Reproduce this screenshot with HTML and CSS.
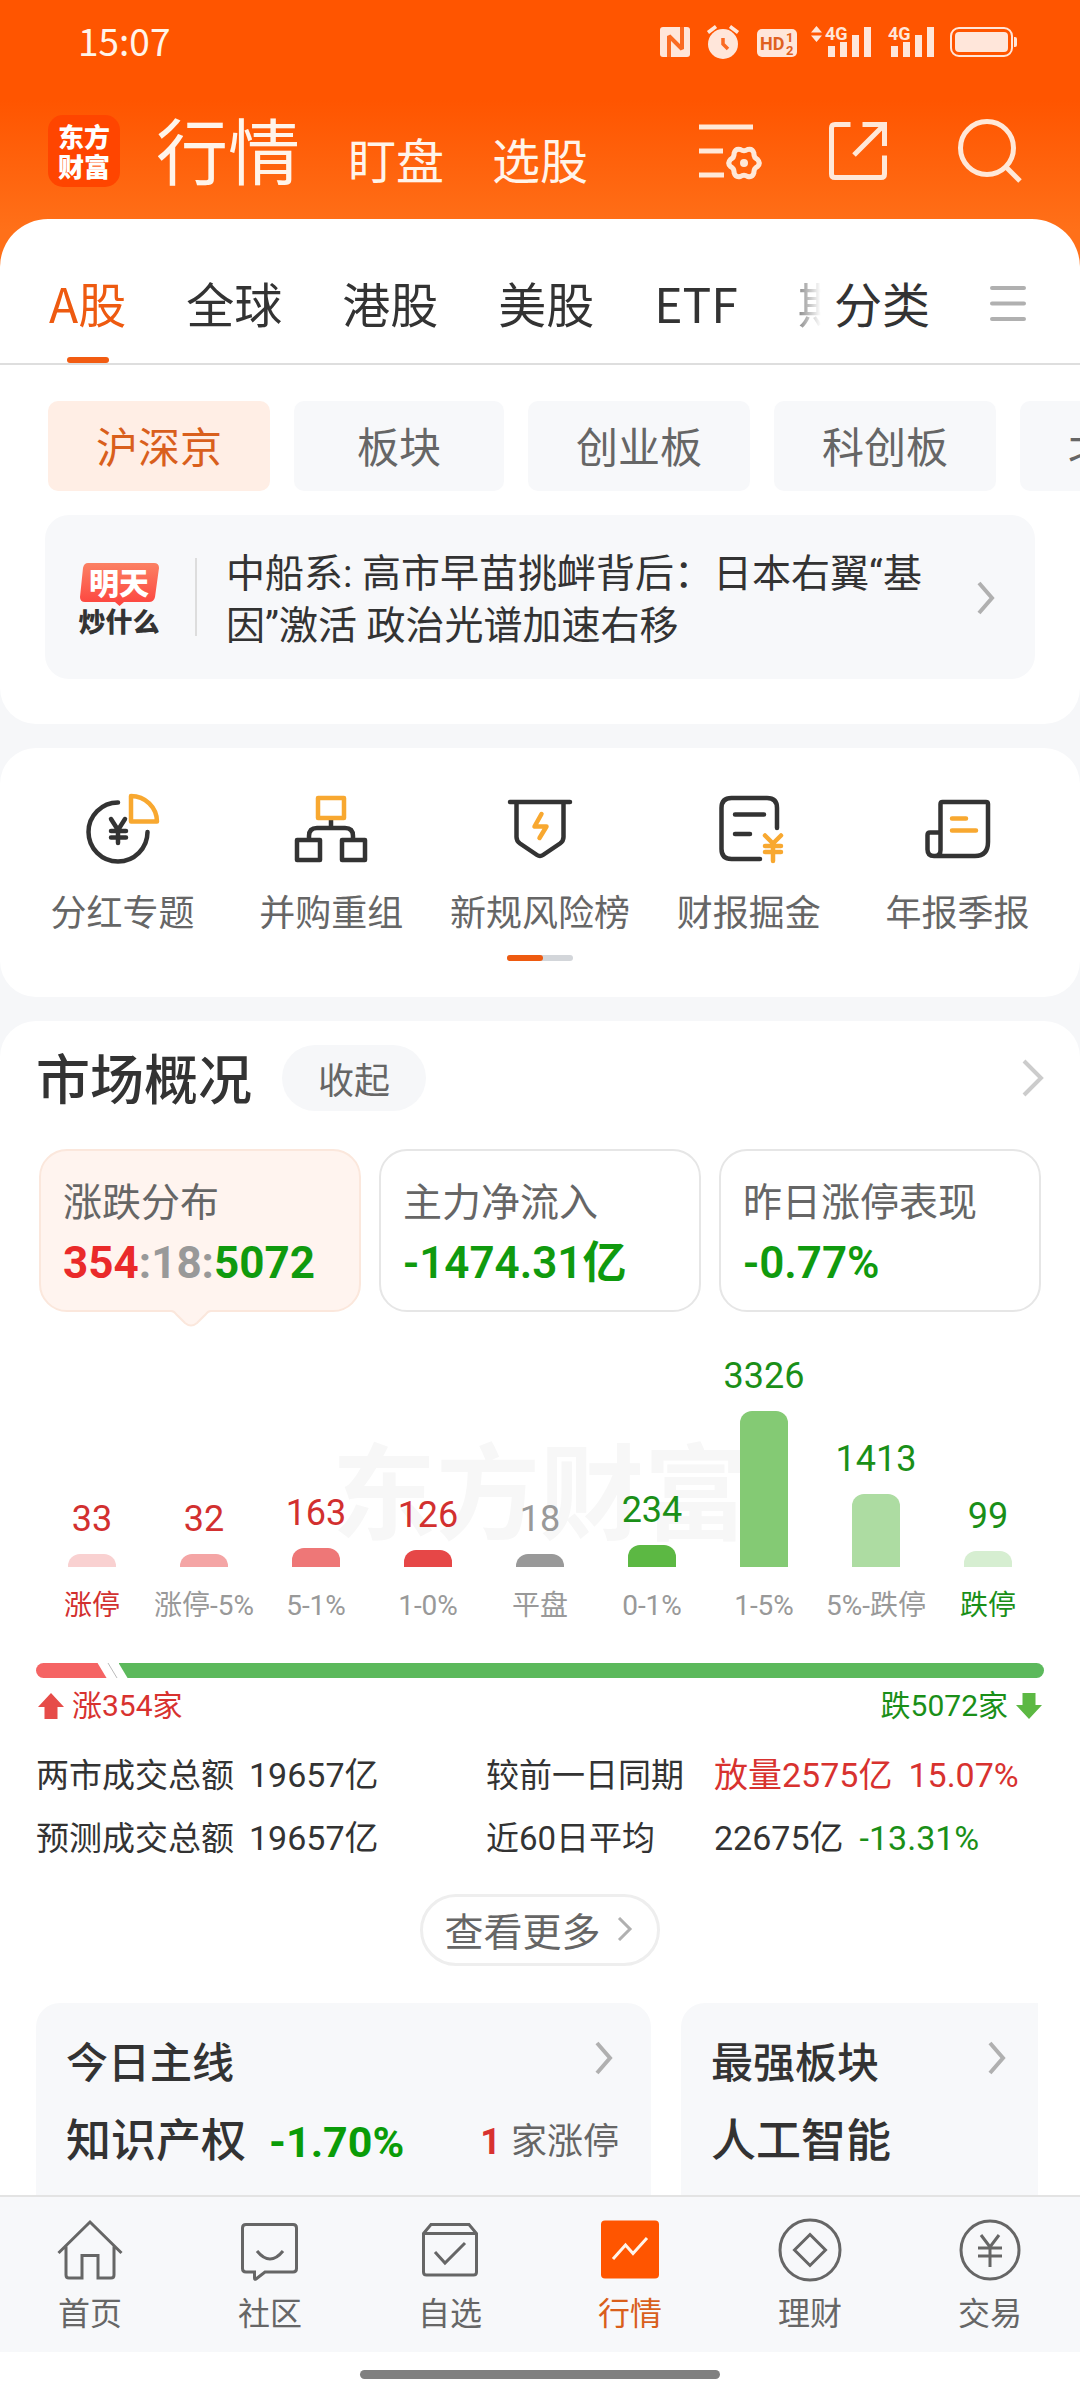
FILE: index.html
```html
<!DOCTYPE html>
<html lang="zh-CN">
<head>
<meta charset="utf-8">
<meta name="viewport" content="width=device-width, initial-scale=1">
<title>行情</title>
<link rel="stylesheet" href="styles.css">
</head>
<body>
<div class="app">
  <header class="header">
    <div class="status">
      <time class="clock">15:07</time>
      <svg class="status-icons" viewBox="0 0 364 36" aria-hidden="true">
        <g fill="#ffe6da">
          <rect x="4" y="3" width="30" height="30" rx="3"/>
          <path d="M52 8.500l8-6M82 8.500l-8-6" stroke="#ffe6da" stroke-width="3.500"/>
          <circle cx="67" cy="20" r="15"/>
          <rect x="101" y="5" width="40" height="28" rx="5"/>
          <path d="M155 8.500l5.500-6.500 5.500 6.500zM155 11.500l5.500 6.500 5.500-6.500z"/>
          <path d="M172 22h7v11h-7zM184 18h7v15h-7zM196 11h7v22h-7zM208 3h7v30h-7z"/>
          <path d="M235 22h7v11h-7zM247 18h7v15h-7zM259 11h7v22h-7zM271 3h7v30h-7z"/>
          <rect x="299" y="8" width="53" height="20" rx="4"/>
          <path d="M358 13h1q2 0 2 2v6q0 2-2 2h-1z"/>
          <text x="169" y="16" class="signal-text">4G</text>
          <text x="232" y="16" class="signal-text">4G</text>
        </g>
        <rect x="295" y="4" width="61" height="28" rx="8" fill="none" stroke="#ffe6da" stroke-width="2"/>
        <g fill="none" stroke="#fa6a22" stroke-width="4">
          <path d="M13 33V12l13 13V3" stroke-linejoin="bevel"/>
          <path d="M67 14v6l5 5" stroke-width="3.500"/>
        </g>
        <g fill="#e0601f" class="hd-text">
          <text x="104" y="26" font-size="18">HD</text>
          <text x="130" y="18" font-size="13">1</text>
          <text x="130" y="31" font-size="13">2</text>
        </g>
      </svg>
    </div>
    <div class="brand-row">
      <div class="logo"><span>东方</span><span>财富</span></div>
      <nav class="titles">
        <a href="#" class="title-main">行情</a>
        <a href="#">盯盘</a>
        <a href="#">选股</a>
      </nav>
      <div class="tools">
        <button type="button" aria-label="设置">
          <svg viewBox="0 0 72 72"><path d="M7 12h54M7 36h24M7 60h25"/><path transform="translate(52 48)" d="M13.500-3.600Q17 0 13.500 3.600Q9.500 5.500 9.900 9.900Q8.500 14.700 3.600 13.500Q0 11-3.600 13.500Q-8.500 14.700-9.900 9.900Q-9.500 5.500-13.500 3.600Q-17 0-13.500-3.600Q-9.500-5.500-9.900-9.900Q-8.500-14.700-3.600-13.500Q0-11 3.600-13.500Q8.500-14.700 9.900-9.900Q9.500-5.500 13.500-3.600Z"/><circle cx="52" cy="48" r="4" class="dot"/></svg>
        </button>
        <button type="button" aria-label="分享">
          <svg viewBox="0 0 72 72"><path d="M28.500 9.500H13q-3.500 0-3.500 3.500v46q0 3.500 3.500 3.500h46q3.500 0 3.500-3.500V40.500M40.500 9.500h22V31M62 10L32 40"/></svg>
        </button>
        <button type="button" aria-label="搜索">
          <svg viewBox="0 0 72 72"><circle cx="35" cy="33" r="26.500"/><path d="M54 52l14 14"/></svg>
        </button>
      </div>
    </div>
  </header>

  <main class="content">
    <section class="panel panel-top">
      <div class="tabs">
        <nav class="tab-list">
          <a href="#" class="active">A股</a><a href="#">全球</a><a href="#">港股</a><a href="#">美股</a><a href="#">ETF</a><a href="#">期货</a>
        </nav>
        <a href="#" class="category">分类</a>
        <button type="button" class="menu" aria-label="菜单"><svg viewBox="0 0 36 36"><path d="M2 3h32M2 18.500h32M2 34h32"/></svg></button>
      </div>
      <div class="chips">
        <button type="button" class="active">沪深京</button>
        <button type="button">板块</button>
        <button type="button">创业板</button>
        <button type="button">科创板</button>
        <button type="button">北交所</button>
      </div>
      <a href="#" class="news">
        <svg class="news-logo" viewBox="0 0 88 80" aria-hidden="true">
          <defs><linearGradient id="bubble" x1="0" y1="0" x2="0" y2="1"><stop offset="0" stop-color="#fb8163"/><stop offset="1" stop-color="#fd433e"/></linearGradient></defs>
          <path d="M12 4h66q5 0 5 5l-4 29q-1 5-6 5H48l-4.500 4L39 43H9q-5 0-5-5L7 9q1-5 5-5z" fill="url(#bubble)"/>
          <text x="43" y="35" font-size="30" fill="#fff">明天</text>
          <text x="43" y="73" font-size="27" fill="#333">炒什么</text>
        </svg>
        <p>中船系: 高市早苗挑衅背后：日本右翼“基因”激活 政治光谱加速右移</p>
        <svg class="chev" viewBox="0 0 18 34"><path d="M2 2l13 15L2 32"/></svg>
      </a>
    </section>

    <section class="panel shortcuts">
      <div class="shortcut-row">
        <a href="#"><svg viewBox="0 0 72 72"><path d="M32 9.500A29.500 29.500 0 1 0 61.500 39M25 26l7 11 7-11M25 38h15M25 44.500h15M32 37v13"/><path class="accent" d="M45 3v25.500h26A26 26 0 0 0 45 3z"/></svg>分红专题</a>
        <a href="#"><svg viewBox="0 0 72 72"><path d="M36 27v8M14 45v-2q0-8 8-8h28q8 0 8 8v2M2 47h23v20H2zM47 47h23v20H47z"/><path class="accent" d="M23 5h26v20H23z"/></svg>并购重组</a>
        <a href="#"><svg viewBox="0 0 72 72"><path d="M6 9h60M12.500 9v35q0 4 3.500 6.500L33 62q3 2 6 0l17-11.500q3.500-2.500 3.500-6.500V9"/><path class="accent" d="M37.500 21L30.500 33.500h12L35.500 45"/></svg>新规风险榜</a>
        <a href="#"><svg viewBox="0 0 72 72"><path d="M64 35V15q0-10-10-10H18.500q-10 0-10 10v41q0 10 10 10H47M22 21.500h29M22 41h15"/><path class="accent" d="M52 42.500l8 8 8-8M52 53h16M52 59h16M60 50.500V68"/></svg>财报掘金</a>
        <a href="#"><svg viewBox="0 0 72 72"><path d="M18.500 39.500V11q0-2 2-2H64q2 0 2 2v38q0 14-13 14H12q-6.500 0-6.500-6.500V42q0-2.500 2.500-2.500h10.500V57q0 6-5.500 6"/><path class="accent" d="M30 25.500h14M30 37.500h24"/></svg>年报季报</a>
      </div>
      <div class="pager"><span></span></div>
    </section>

    <section class="panel market">
      <div class="market-head">
        <h2>市场概况</h2>
        <button type="button" class="collapse">收起</button>
        <a href="#" class="more" aria-label="更多"><svg class="chev" viewBox="0 0 22 38"><path d="M2 2l17 17L2 36"/></svg></a>
      </div>
      <div class="stats-cards">
        <button type="button" class="stat-card active"><span class="label">涨跌分布</span><span class="value"><span class="up">354</span><span class="flat">:18:</span><span class="down">5072</span></span><svg class="pointer" viewBox="0 0 40 17"><path d="M0 0h40q-3 1-5 4l-9 9q-6 5-12 0L5 4Q3 1 0 0z" fill="#fff4ef"/><path d="M0 1q3 0 5 3l9 9q6 5 12 0l9-9q2-3 5-3" fill="none" stroke="#fbe7dc" stroke-width="2"/></svg></button>
        <button type="button" class="stat-card"><span class="label">主力净流入</span><span class="value down">-1474.31亿</span></button>
        <button type="button" class="stat-card"><span class="label">昨日涨停表现</span><span class="value down">-0.77%</span></button>
      </div>

      <div class="chart">
        <div class="watermark" aria-hidden="true">东方财富</div>
        <div class="col red"><b>33</b><i style="height:13px;background:#f9d1d1"></i><span>涨停</span></div>
        <div class="col red mid"><b>32</b><i style="height:13px;background:#f4a5a5"></i><span>涨停-5%</span></div>
        <div class="col red mid"><b>163</b><i style="height:19px;background:#ee7777"></i><span>5-1%</span></div>
        <div class="col red mid"><b>126</b><i style="height:17px;background:#e64747"></i><span>1-0%</span></div>
        <div class="col mid"><b>18</b><i style="height:13px;background:#999999"></i><span>平盘</span></div>
        <div class="col green mid"><b>234</b><i style="height:22px;background:#5cb843"></i><span>0-1%</span></div>
        <div class="col green mid"><b>3326</b><i style="height:156px;background:#84ca74"></i><span>1-5%</span></div>
        <div class="col green mid"><b>1413</b><i style="height:73px;background:#addca2"></i><span>5%-跌停</span></div>
        <div class="col green"><b>99</b><i style="height:16px;background:#d6eed1"></i><span>跌停</span></div>
      </div>

      <div class="ratio">
        <span class="ratio-up" style="width:7%"></span>
        <svg viewBox="0 0 12 15"><path d="M1 0l9 15" stroke="#bbb" stroke-width="1"/></svg>
        <span class="ratio-down"></span>
      </div>
      <div class="ratio-text">
        <span class="up-text"><svg viewBox="0 0 26 26"><path d="M13 0l13 14h-6.500v12h-13V14H0z"/></svg>涨354家</span>
        <span class="down-text">跌5072家<svg viewBox="0 0 26 26"><path d="M13 26L0 12h6.500V0h13v12H26z"/></svg></span>
      </div>

      <div class="turnover">
        <div><span class="name">两市成交总额</span><span>19657亿</span></div>
        <div class="compare"><span class="name">较前一日同期</span><span class="up-text">放量2575亿</span><span class="up-text pct-up">15.07%</span></div>
        <div><span class="name">预测成交总额</span><span>19657亿</span></div>
        <div class="compare"><span class="name">近60日平均</span><span>22675亿</span><span class="down-text pct-down">-13.31%</span></div>
      </div>

      <button type="button" class="view-more">查看更多<svg class="chev" viewBox="0 0 16 24"><path d="M2 1l11 11L2 23"/></svg></button>

      <div class="themes">
        <a href="#" class="theme theme-wide">
          <div class="theme-head"><h3>今日主线</h3><svg class="chev" viewBox="0 0 18 34"><path d="M2 2l13 15L2 32"/></svg></div>
          <div class="theme-row"><strong>知识产权</strong><span class="pct">-1.70%</span><span class="count"><em>1</em>家涨停</span></div>
        </a>
        <a href="#" class="theme">
          <div class="theme-head"><h3>最强板块</h3><svg class="chev" viewBox="0 0 18 34"><path d="M2 2l13 15L2 32"/></svg></div>
          <div class="theme-row"><strong>人工智能</strong></div>
        </a>
      </div>
    </section>
  </main>

  <footer class="footer">
    <nav class="bottom-nav">
      <a href="#"><svg viewBox="0 0 72 66"><path d="M4.500 36L36 5l31.500 31M12 29.500V58q0 3 3 3h13V38.500h16V61h13q3 0 3-3V29.500"/></svg>首页</a>
      <a href="#"><svg viewBox="0 0 72 66"><path d="M12 7.500h47q3.500 0 3.500 3.500v40.500q0 3.500-3.500 3.500H31l-9 7q-1.500 1-1.500-1v-6H12q-3.500 0-3.500-3.500V11q0-3.500 3.500-3.500zM23 34q13 16 26 0"/></svg>社区</a>
      <a href="#"><svg viewBox="0 0 72 66"><path d="M9.500 16.500L17 7.500h38l7.500 9V55q0 3-3 3h-47q-3 0-3-3zM9.500 16.500h53M21 35l10 11 20-20"/></svg>自选</a>
      <a href="#" class="active"><svg viewBox="0 0 72 66"><rect x="7" y="3.500" width="58" height="58" rx="4" fill="#ff5500" stroke="none"/><path d="M19 42l12.500-14 7.500 8.500L53 21"/></svg>行情</a>
      <a href="#"><svg viewBox="0 0 72 66"><circle cx="36" cy="33" r="30"/><path d="M36 17.500L51.500 33 36 48.500 20.500 33z"/></svg>理财</a>
      <a href="#"><svg viewBox="0 0 72 66"><circle cx="36" cy="33" r="29"/><path d="M27 18l9 12 9-12M24 31h24M24 39h24M36 30v20"/></svg>交易</a>
    </nav>
    <div class="gesture"><span></span></div>
  </footer>
</div>
</body>
</html>
```
FILE: styles.css
```css
* { box-sizing: border-box; margin: 0; padding: 0; }

body {
  font-family: Roboto, "Noto Sans CJK SC", sans-serif;
  color: #333;
  background: #f6f7f9;
}

a { color: inherit; text-decoration: none; }
button { font: inherit; color: inherit; background: none; border: 0; }
svg { display: block; fill: none; flex: none; }

.app {
  height: 100vh;
  display: flex;
  flex-direction: column;
  overflow: hidden;
}

/* header */
.header {
  flex: none;
  font-family: "Noto Sans CJK SC", sans-serif;
  color: #fff4ea;
  background: linear-gradient(#ff5500 100px, #ff7019 230px);
  padding-bottom: 80px;
  margin-bottom: -48px;
}
.status {
  height: 84px;
  padding: 0 60px 0 78px;
  display: flex;
  align-items: center;
  justify-content: space-between;
}
.clock { font-size: 37px; line-height: 40px; margin-bottom: 4px; }
.status-icons { width: 364px; height: 36px; overflow: visible; }
.signal-text { font: bold 18px Roboto, sans-serif; }
.hd-text { font-family: Roboto, sans-serif; font-weight: 700; }
.brand-row {
  margin-top: 31px;
  height: 72px;
  padding: 0 56px 0 48px;
  display: flex;
  align-items: center;
}
.logo {
  width: 72px;
  height: 72px;
  border-radius: 15px;
  background: #ff4500;
  color: #fff;
  font-size: 26px;
  font-weight: 900;
  line-height: 30px;
  display: flex;
  flex-direction: column;
  align-items: center;
  justify-content: center;
}
.titles {
  margin-left: 36px;
  display: flex;
  align-items: last baseline;
  gap: 48px;
  font-size: 48px;
  line-height: 76px;
  padding-top: 3px;
}
.title-main { font-size: 72px; }
.tools { margin-left: auto; display: flex; gap: 58px; }
.tools svg { width: 72px; height: 72px; stroke: #ffe8d8; stroke-width: 5; }
.tools .dot { fill: #ffe8d8; stroke: none; }

/* panels */
.content { flex: 1; min-height: 0; overflow: hidden; }
.panel { background: #fff; border-radius: 36px; margin-bottom: 24px; }
.panel-top { border-radius: 48px 48px 36px 36px; padding-bottom: 45px; }

.tabs {
  font-family: "Noto Sans CJK SC", sans-serif;
  font-size: 48px;
  line-height: 72px;
  display: flex;
  padding: 0 48px 0 49px;
  border-bottom: 2px solid #dedede;
}
.tab-list {
  flex: 1;
  min-width: 0;
  display: flex;
  gap: 60px;
  overflow: hidden;
  white-space: nowrap;
  -webkit-mask-image: linear-gradient(to left, transparent, #000 40px);
  mask-image: linear-gradient(to left, transparent, #000 40px);
}
.tab-list a, .category { padding: 47px 0 25px; }
.tab-list a { flex: none; position: relative; }
.tab-list .active { color: #ee5a10; }
.tab-list .active::after {
  content: "";
  position: absolute;
  bottom: 0;
  left: 50%;
  width: 42px;
  height: 6px;
  margin-left: -21px;
  border-radius: 3px;
  background: #f25c12;
}
.category { margin-left: 13px; }
.menu { margin-left: 60px; padding: 24px 6px 0 0; }
.menu svg { width: 36px; height: 36px; stroke: #b0b0b0; stroke-width: 4; stroke-linecap: round; }

.chips {
  margin-top: 36px;
  padding-left: 48px;
  display: flex;
  gap: 24px;
  overflow: hidden;
}
.chips button {
  flex: none;
  min-width: 210px;
  height: 90px;
  padding: 0 48px 3px;
  border-radius: 10px;
  background: #f7f8fa;
  color: #666;
  font-size: 42px;
}
.chips .active { background: #ffeee5; color: #d95f1c; }

.news {
  margin: 24px 45px 0;
  padding: 33px 40px 27px 31px;
  border-radius: 24px;
  background: #f7f8fa;
  display: flex;
  align-items: center;
  font-size: 39px;
  line-height: 52px;
}
.news-logo {
  width: 88px;
  height: 80px;
  margin-bottom: 3px;
  font-family: "Noto Sans CJK SC", sans-serif;
  font-weight: 900;
  text-anchor: middle;
}
.news p {
  flex: 1;
  margin-left: 31px;
  padding: 0 48px 0 31px;
  position: relative;
}
.news p::before {
  content: "";
  position: absolute;
  left: 0;
  top: 10px;
  bottom: 16px;
  width: 2px;
  background: #ddd;
}
.chev { width: 18px; height: 34px; stroke: #b0b0b0; stroke-width: 4; }
.news .chev { margin-bottom: 4px; }

/* shortcuts */
.shortcuts { padding: 45px 18px 36px; }
.shortcut-row { display: grid; grid-template-columns: repeat(5, 1fr); }
.shortcut-row a {
  display: flex;
  flex-direction: column;
  align-items: center;
  gap: 25px;
  font-size: 36px;
  line-height: 48px;
  color: #666;
  white-space: nowrap;
}
.shortcut-row svg {
  width: 72px;
  height: 72px;
  overflow: visible;
  stroke: #333;
  stroke-width: 4.500;
  stroke-linecap: round;
  stroke-linejoin: round;
}
.shortcut-row .accent { stroke: #f8a830; }
.pager {
  width: 66px;
  height: 6px;
  margin: 17px auto 0;
  border-radius: 3px;
  background: #d3d6da;
}
.pager span { display: block; width: 36px; height: 6px; border-radius: 3px; background: #ee5a10; }

/* market overview */
.market { padding-top: 24px; }
.market-head { display: flex; align-items: center; height: 66px; padding: 0 36px; }
.market-head h2 { font-size: 54px; font-weight: 500; line-height: 66px; padding-top: 7px; }
.collapse {
  width: 144px;
  height: 66px;
  margin-left: 30px;
  border-radius: 33px;
  background: #f6f7f9;
  color: #666;
  font-size: 36px;
}
.more { margin-left: auto; }
.more .chev { width: 22px; height: 38px; stroke: #ccc; }

.stats-cards {
  margin: 38px 39px 0;
  display: grid;
  grid-template-columns: repeat(3, 1fr);
  gap: 18px;
}
.stat-card {
  position: relative;
  padding: 22px 0 17px 22px;
  border: 2px solid #e6e6e6;
  border-radius: 28px;
  text-align: left;
  line-height: 60px;
}
.stat-card.active { background: #fff4ef; border-color: #fbe7dc; }
.stat-card .label { display: block; font-size: 39px; color: #666; }
.stat-card .value { display: block; font-size: 44px; font-weight: 700; }
.pointer { position: absolute; left: 50%; top: 100%; width: 40px; height: 17px; margin-left: -29px; }
.up { color: #ea2a2a; }
.flat { color: #999; }
.down { color: #109a0e; }
.value.down { font-weight: 600; }
.up-text { color: #d8322f; }
.down-text { color: #1a8f18; }

/* distribution chart */
.chart {
  position: relative;
  margin: 44px 36px 0;
  display: grid;
  grid-template-columns: repeat(9, 1fr);
  align-items: end;
}
.watermark {
  position: absolute;
  left: 0;
  right: 0;
  top: 89px;
  text-align: center;
  font-size: 104px;
  font-weight: 700;
  line-height: 104px;
  color: #f7f7f7;
}
.col {
  position: relative;
  display: flex;
  flex-direction: column;
  align-items: center;
  color: #999;
  white-space: nowrap;
}
.col b { font-size: 36px; font-weight: 400; line-height: 40px; }
.col i { width: 48px; margin-top: 15px; border-radius: 12px 12px 0 0; }
.col span { margin-top: 21px; font-size: 28px; line-height: 36px; }
.col.red { color: #d2302f; }
.col.green { color: #1a8f18; }
.col.mid span { color: #999; }

.ratio { margin: 39px 36px 0; height: 15px; display: flex; }
.ratio-up {
  border-radius: 8px 0 0 8px;
  background: #f56464;
  clip-path: polygon(0 0, calc(100% - 9px) 0, 100% 100%, 0 100%);
}
.ratio svg { width: 12px; height: 15px; }
.ratio-down {
  flex: 1;
  border-radius: 0 8px 8px 0;
  background: #5cb95c;
  clip-path: polygon(0 0, 100% 0, 100% 100%, 9px 100%);
}
.ratio-text {
  margin: 8px 38px 0;
  display: flex;
  justify-content: space-between;
  font-size: 30px;
  line-height: 40px;
}
.ratio-text span { display: flex; align-items: center; gap: 8px; }
.ratio-text svg { width: 26px; height: 26px; }
.ratio-text .up-text svg { fill: #e64c49; }
.ratio-text .down-text svg { fill: #5cb843; }

.turnover {
  margin: 18px 36px 0;
  display: grid;
  grid-template-columns: 450px 1fr;
  font-size: 34px;
  line-height: 62px;
  white-space: nowrap;
}
.turnover .name { display: inline-block; min-width: 198px; margin-right: 15px; font-size: 33px; }
.turnover .compare .name { margin-right: 30px; }
.pct-up, .pct-down { margin-left: 16px; }

.view-more {
  margin: 24px auto 0;
  width: 240px;
  height: 72px;
  padding: 0 3px 2px 0;
  border: 3px solid #eee;
  border-radius: 36px;
  display: flex;
  align-items: center;
  justify-content: center;
  gap: 16px;
  font-size: 39px;
  color: #666;
}
.view-more .chev { width: 16px; height: 24px; stroke-width: 3; }

.themes { margin: 37px 42px 0 36px; display: flex; gap: 30px; overflow: hidden; }
.theme { flex: 1; padding: 31px 32px 60px 30px; background: #f7f8fa; border-radius: 24px 0 0 0; }
.theme-wide { flex: none; width: 615px; border-radius: 24px; }
.theme-head { display: flex; align-items: center; justify-content: space-between; }
.theme-head h3 { font-size: 42px; font-weight: 500; line-height: 60px; }
.theme-head .chev { margin-bottom: 12px; }
.theme-wide .chev { margin-right: 6px; }
.theme-row { margin-top: 18px; display: flex; align-items: center; font-size: 45px; line-height: 60px; white-space: nowrap; }
.theme-row strong { font-weight: 500; }
.theme-row .pct { margin-left: 23px; font-size: 43px; font-weight: 700; color: #0a9c08; }
.theme-row .count { margin-left: auto; font-size: 36px; color: #666; }
.theme-row em { margin-right: 10px; font-style: normal; font-weight: 700; color: #d8322f; }

/* bottom navigation */
.footer { flex: none; position: relative; background: #fff; }
.bottom-nav {
  display: grid;
  grid-template-columns: repeat(6, 1fr);
  padding: 20px 0 18px;
  border-top: 2px solid #e3e3e3;
  background: #f7f8fa;
}
.bottom-nav a {
  display: flex;
  flex-direction: column;
  align-items: center;
  gap: 11px;
  font-size: 32px;
  line-height: 40px;
  color: #666;
}
.bottom-nav svg { width: 72px; height: 66px; stroke: #666; stroke-width: 3; }
.bottom-nav .active { color: #d95f1c; }
.bottom-nav .active svg { stroke: #fff4ea; }
.gesture { height: 48px; padding-bottom: 4px; display: flex; align-items: center; justify-content: center; }
.gesture span { width: 33.3333%; height: 9px; border-radius: 5px; background: #808080; }
```
